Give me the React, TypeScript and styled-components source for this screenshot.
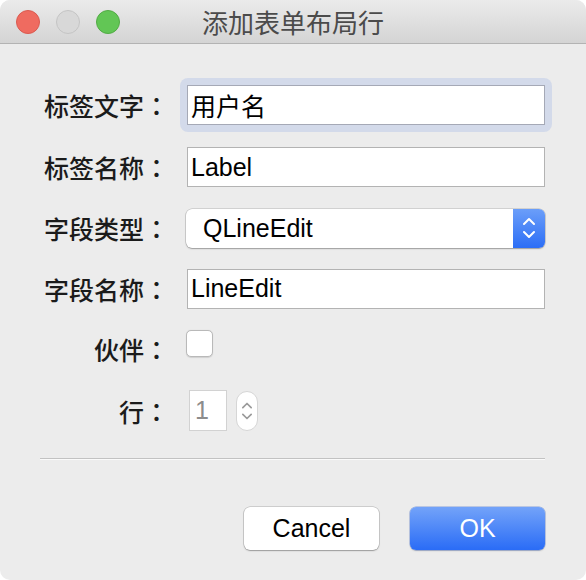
import React from 'react';
import styled, { createGlobalStyle } from 'styled-components';

const GlobalStyle = createGlobalStyle`
  html, body {
    margin: 0;
    padding: 0;
    background: #ffffff;
  }
  body {
    font-family: "Liberation Sans", "Noto Sans CJK SC", sans-serif;
  }
`;

const Window = styled.div`
  width: 586px;
  height: 580px;
  background: #ececec;
  border-radius: 10px;
  overflow: hidden;
  display: flex;
  flex-direction: column;
`;

const TitleBar = styled.div`
  height: 43px;
  flex-shrink: 0;
  display: flex;
  align-items: center;
  position: relative;
  background: linear-gradient(to bottom, #ebebeb, #d4d4d4);
  border-bottom: 1px solid #b3b3b3;
`;

const Lights = styled.div`
  display: flex;
  gap: 16px;
  padding-left: 16px;
`;

const Light = styled.span<{ $fill: string; $edge: string }>`
  width: 22px;
  height: 22px;
  border-radius: 50%;
  background: ${(p) => p.$fill};
  border: 1px solid ${(p) => p.$edge};
`;

const Title = styled.div`
  position: absolute;
  left: 0;
  right: 0;
  text-align: center;
  font-family: "Noto Sans CJK SC", sans-serif;
  font-size: 26px;
  color: #4b4b4b;
  pointer-events: none;
`;

const Body = styled.div`
  flex: 1;
  display: flex;
  flex-direction: column;
  padding: 41px 41px 0 40px;
`;

const Form = styled.div`
  display: grid;
  grid-template-columns: 127px 1fr;
  grid-template-rows: 40px 40px 38px 39px 37px 43px;
  column-gap: 20px;
  row-gap: 22px;
  align-items: center;
`;

const Label = styled.div`
  justify-self: end;
  font-family: "Noto Sans CJK SC", sans-serif;
  font-weight: 500;
  font-size: 25px;
  color: #1b1b1b;
  white-space: nowrap;
`;

const Colon = styled.span`
  font-family: "Noto Sans CJK JP", sans-serif;
  margin-right: -2px;
`;

const FocusRing = styled.div`
  margin: -7px;
  padding: 7px;
  border-radius: 8px;
  background: #d3daea;
  display: flex;
`;

const TextInput = styled.div<{ $focused?: boolean }>`
  height: 40px;
  box-sizing: border-box;
  flex: 1;
  background: #ffffff;
  border: 1px solid ${(p) => (p.$focused ? '#a5a9b6' : '#b3b3b3')};
  display: flex;
  align-items: center;
  padding-left: 3px;
  font-size: 25px;
  color: #000000;
`;

const Combo = styled.div`
  height: 39px;
  margin-left: -1px;
  display: flex;
  border-radius: 6px;
  background: #ffffff;
  box-shadow: 0 0 0 0.5px rgba(0, 0, 0, 0.22), 0 1px 1.5px rgba(0, 0, 0, 0.25);
  overflow: hidden;
`;

const ComboText = styled.div`
  flex: 1;
  display: flex;
  align-items: center;
  padding-left: 17px;
  font-size: 25px;
  color: #000000;
`;

const ComboArrows = styled.div`
  width: 32px;
  display: flex;
  align-items: center;
  justify-content: center;
  background: linear-gradient(to bottom, #6b9ef9, #2c6ef6);
`;

const CheckBox = styled.div`
  align-self: start;
  margin-left: -1px;
  width: 27px;
  height: 27px;
  box-sizing: border-box;
  border-radius: 5px;
  background: #ffffff;
  border: 1px solid #b9b9b9;
  box-shadow: 0 0.5px 1px rgba(0, 0, 0, 0.12);
`;

const SpinRow = styled.div`
  display: flex;
  align-items: center;
  gap: 9px;
  margin-left: 2px;
`;

const SpinField = styled.div`
  width: 38px;
  height: 41px;
  box-sizing: border-box;
  background: #ffffff;
  border: 1px solid #d2d2d2;
  display: flex;
  align-items: center;
  padding-left: 5px;
  font-size: 25px;
  color: #8c8c8c;
`;

const SpinArrows = styled.div`
  width: 22px;
  height: 40px;
  box-sizing: border-box;
  border-radius: 11px;
  background: #ffffff;
  border: 1px solid #d6d6d6;
  display: flex;
  align-items: center;
  justify-content: center;
`;

const Separator = styled.div`
  margin-top: 26px;
  height: 1px;
  background: #c2c2c2;
  border-bottom: 1px solid #fafafa;
`;

const Buttons = styled.div`
  margin-top: 47px;
  display: flex;
  justify-content: flex-end;
  gap: 31px;
`;

const Button = styled.div<{ $primary?: boolean }>`
  width: 135px;
  height: 43px;
  box-sizing: border-box;
  border-radius: 6px;
  display: flex;
  align-items: center;
  justify-content: center;
  font-size: 25px;
  color: ${(p) => (p.$primary ? '#ffffff' : '#000000')};
  background: ${(p) =>
    p.$primary ? 'linear-gradient(to bottom, #73a3f9, #2a6cf6)' : '#ffffff'};
  box-shadow: ${(p) =>
    p.$primary
      ? '0 0 0 0.5px rgba(40, 90, 200, 0.5), 0 1px 1.5px rgba(0, 0, 0, 0.2)'
      : '0 0 0 0.5px rgba(0, 0, 0, 0.25), 0 1px 1.5px rgba(0, 0, 0, 0.25)'};
`;

function Chevrons({ color, w, h }: { color: string; w: number; h: number }) {
  return (
    <svg width={w} height={h} viewBox="0 0 12 24" fill="none">
      <path d="M1 8 L6 3 L11 8" stroke={color} strokeWidth="2" strokeLinecap="round" strokeLinejoin="round" />
      <path d="M1 16 L6 21 L11 16" stroke={color} strokeWidth="2" strokeLinecap="round" strokeLinejoin="round" />
    </svg>
  );
}

function FieldLabel({ text }: { text: string }) {
  return (
    <Label>
      {text}
      <Colon>：</Colon>
    </Label>
  );
}

export default function App() {
  return (
    <>
      <GlobalStyle />
      <Window>
        <TitleBar>
          <Lights>
            <Light $fill="#ef6b60" $edge="#da5a50" />
            <Light $fill="#d8d8d8" $edge="#c4c4c4" />
            <Light $fill="#62c655" $edge="#52ab45" />
          </Lights>
          <Title>添加表单布局行</Title>
        </TitleBar>
        <Body>
          <Form>
            <FieldLabel text="标签文字" />
            <FocusRing>
              <TextInput $focused>用户名</TextInput>
            </FocusRing>

            <FieldLabel text="标签名称" />
            <TextInput>Label</TextInput>

            <FieldLabel text="字段类型" />
            <Combo>
              <ComboText>QLineEdit</ComboText>
              <ComboArrows>
                <Chevrons color="#ffffff" w={12} h={26} />
              </ComboArrows>
            </Combo>

            <FieldLabel text="字段名称" />
            <TextInput>LineEdit</TextInput>

            <FieldLabel text="伙伴" />
            <CheckBox />

            <FieldLabel text="行" />
            <SpinRow>
              <SpinField>1</SpinField>
              <SpinArrows>
                <Chevrons color="#9a9a9a" w={10} h={26} />
              </SpinArrows>
            </SpinRow>
          </Form>
          <Separator />
          <Buttons>
            <Button>Cancel</Button>
            <Button $primary>OK</Button>
          </Buttons>
        </Body>
      </Window>
    </>
  );
}
